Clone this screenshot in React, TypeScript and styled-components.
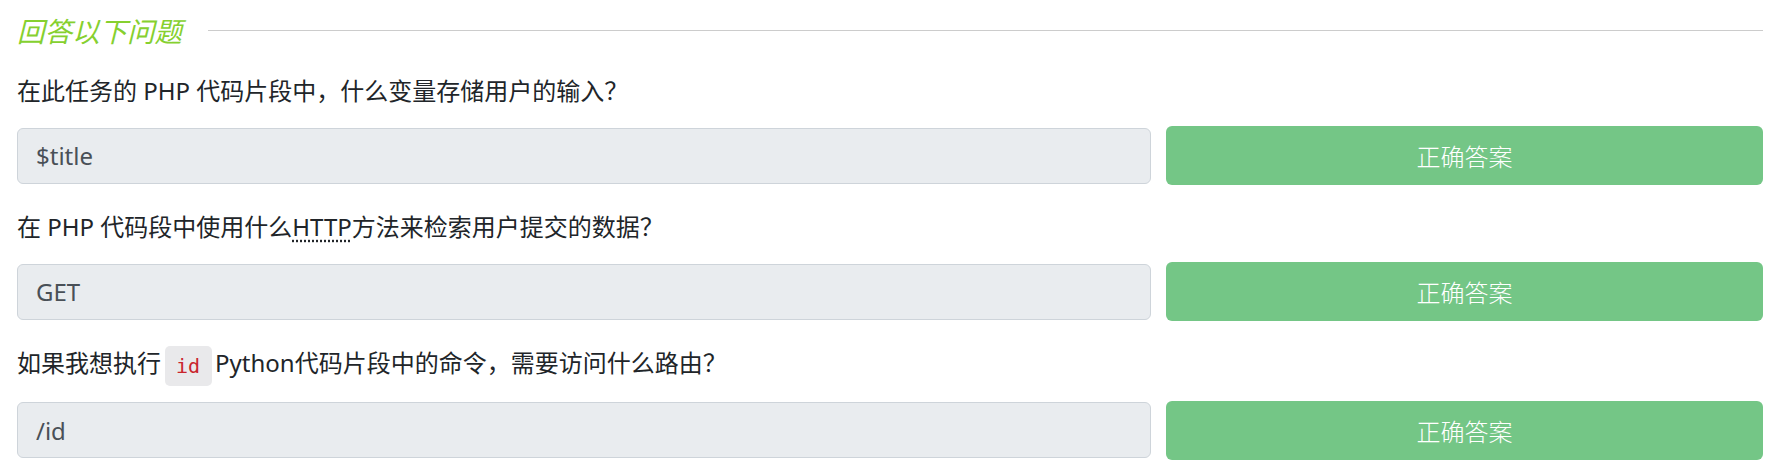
import React from "react";
import styled, { createGlobalStyle } from "styled-components";

const GlobalStyle = createGlobalStyle`
  html, body {
    margin: 0;
    padding: 0;
    background: #ffffff;
  }
  body {
    font-family: "Noto Sans", "Noto Sans CJK SC", sans-serif;
    color: #212529;
  }
`;

const Page = styled.div`
  padding: 10px 27px 12px 17px;
  display: flex;
  flex-direction: column;
`;

const Header = styled.div`
  display: flex;
  align-items: center;
  height: 40px;
  gap: 26px;
  margin-bottom: 23px;
`;

const Title = styled.h3`
  margin: 0;
  font-family: "Noto Sans CJK SC", sans-serif;
  font-style: italic;
  font-weight: 400;
  font-size: 27.5px;
  line-height: 40px;
  color: #86d02f;
`;

const Rule = styled.div`
  flex: 1;
  height: 0;
  border-top: 1px solid #cccccc;
`;

const Blocks = styled.div`
  display: flex;
  flex-direction: column;
  gap: 24px;
`;

const Block = styled.div`
  display: flex;
  flex-direction: column;
`;

const Question = styled.p`
  margin: 0 0 17px;
  font-size: 24px;
  line-height: 36px;
  color: #212529;
`;

const Abbr = styled.abbr`
  text-decoration: underline dotted;
  text-underline-offset: 4px;
  cursor: help;
`;

const Code = styled.code`
  display: inline-block;
  vertical-align: middle;
  height: 40px;
  line-height: 40px;
  padding: 0 12px 0 11px;
  margin: -2px 3px -2px 4px;
  border-radius: 5px;
  background: #e9e9eb;
  color: #c9252d;
  font-family: "DejaVu Sans Mono", "Liberation Mono", monospace;
  font-size: 20px;
`;

const AnswerRow = styled.div`
  display: flex;
  align-items: center;
  gap: 15px;
  height: 59px;
`;

const AnswerInput = styled.input`
  flex: 0 0 1134px;
  box-sizing: border-box;
  height: 56px;
  padding: 0 18px;
  border: 1px solid #ced4da;
  border-radius: 6px;
  background: #e9ecef;
  color: #495057;
  font-family: "Noto Sans", "Noto Sans CJK SC", sans-serif;
  font-size: 24px;
  outline: none;
`;

const CorrectButton = styled.button`
  flex: 1;
  height: 59px;
  border: none;
  border-radius: 6px;
  background: #74c686;
  color: #ffffff;
  font-family: "Noto Sans CJK SC", sans-serif;
  font-weight: 300;
  font-size: 24px;
  cursor: pointer;
`;

type QA = { question: React.ReactNode; answer: string };

const items: QA[] = [
  {
    question: "在此任务的 PHP 代码片段中，什么变量存储用户的输入？",
    answer: "$title",
  },
  {
    question: (
      <>
        在 PHP 代码段中使用什么<Abbr title="HyperText Transfer Protocol">HTTP</Abbr>
        方法来检索用户提交的数据？
      </>
    ),
    answer: "GET",
  },
  {
    question: (
      <>
        如果我想执行<Code>id</Code>Python代码片段中的命令，需要访问什么路由？
      </>
    ),
    answer: "/id",
  },
];

export default function App() {
  return (
    <>
      <GlobalStyle />
      <Page>
        <Header>
          <Title>回答以下问题</Title>
          <Rule />
        </Header>
        <Blocks>
          {items.map((item, i) => (
            <Block key={i}>
              <Question>{item.question}</Question>
              <AnswerRow>
                <AnswerInput readOnly value={item.answer} />
                <CorrectButton type="button">正确答案</CorrectButton>
              </AnswerRow>
            </Block>
          ))}
        </Blocks>
      </Page>
    </>
  );
}
